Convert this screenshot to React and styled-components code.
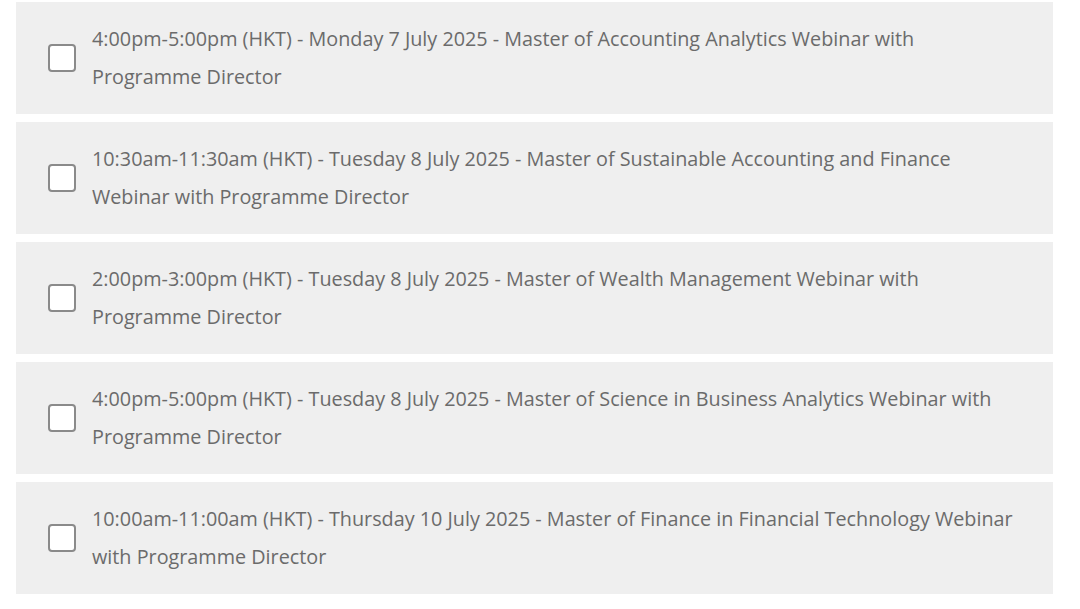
import React from 'react';
import styled, { createGlobalStyle } from 'styled-components';

const GlobalStyle = createGlobalStyle`
  body {
    margin: 0;
    background: #fff;
    font-family: "Open Sans", "Liberation Sans", sans-serif;
  }
`;

const List = styled.div`
  display: flex;
  flex-direction: column;
  gap: 8px;
  padding: 2px 27px 0 16px;
`;

const Row = styled.label`
  display: flex;
  align-items: center;
  gap: 16px;
  height: 112px;
  padding: 0 30px 0 32px;
  background: #efefef;
  box-sizing: border-box;
  cursor: pointer;
`;

const Box = styled.span`
  flex: none;
  width: 28px;
  height: 28px;
  box-sizing: border-box;
  border: 2px solid #8a8a8a;
  border-radius: 4px;
  background: #fff;
`;

const Text = styled.span`
  font-size: 19.8px;
  line-height: 38px;
  color: #6b6b6b;
  white-space: nowrap;
`;

// each session is split where the original wraps
const sessions = [
  ['4:00pm-5:00pm (HKT) - Monday 7 July 2025 - Master of Accounting Analytics Webinar with', 'Programme Director'],
  ['10:30am-11:30am (HKT) - Tuesday 8 July 2025 - Master of Sustainable Accounting and Finance', 'Webinar with Programme Director'],
  ['2:00pm-3:00pm (HKT) - Tuesday 8 July 2025 - Master of Wealth Management Webinar with', 'Programme Director'],
  ['4:00pm-5:00pm (HKT) - Tuesday 8 July 2025 - Master of Science in Business Analytics Webinar with', 'Programme Director'],
  ['10:00am-11:00am (HKT) - Thursday 10 July 2025 - Master of Finance in Financial Technology Webinar', 'with Programme Director'],
];

export default function App() {
  return (
    <>
      <GlobalStyle />
      <List>
        {sessions.map(([first, second]) => (
          <Row key={first}>
            <Box />
            <Text>
              {first}
              <br />
              {second}
            </Text>
          </Row>
        ))}
      </List>
    </>
  );
}
